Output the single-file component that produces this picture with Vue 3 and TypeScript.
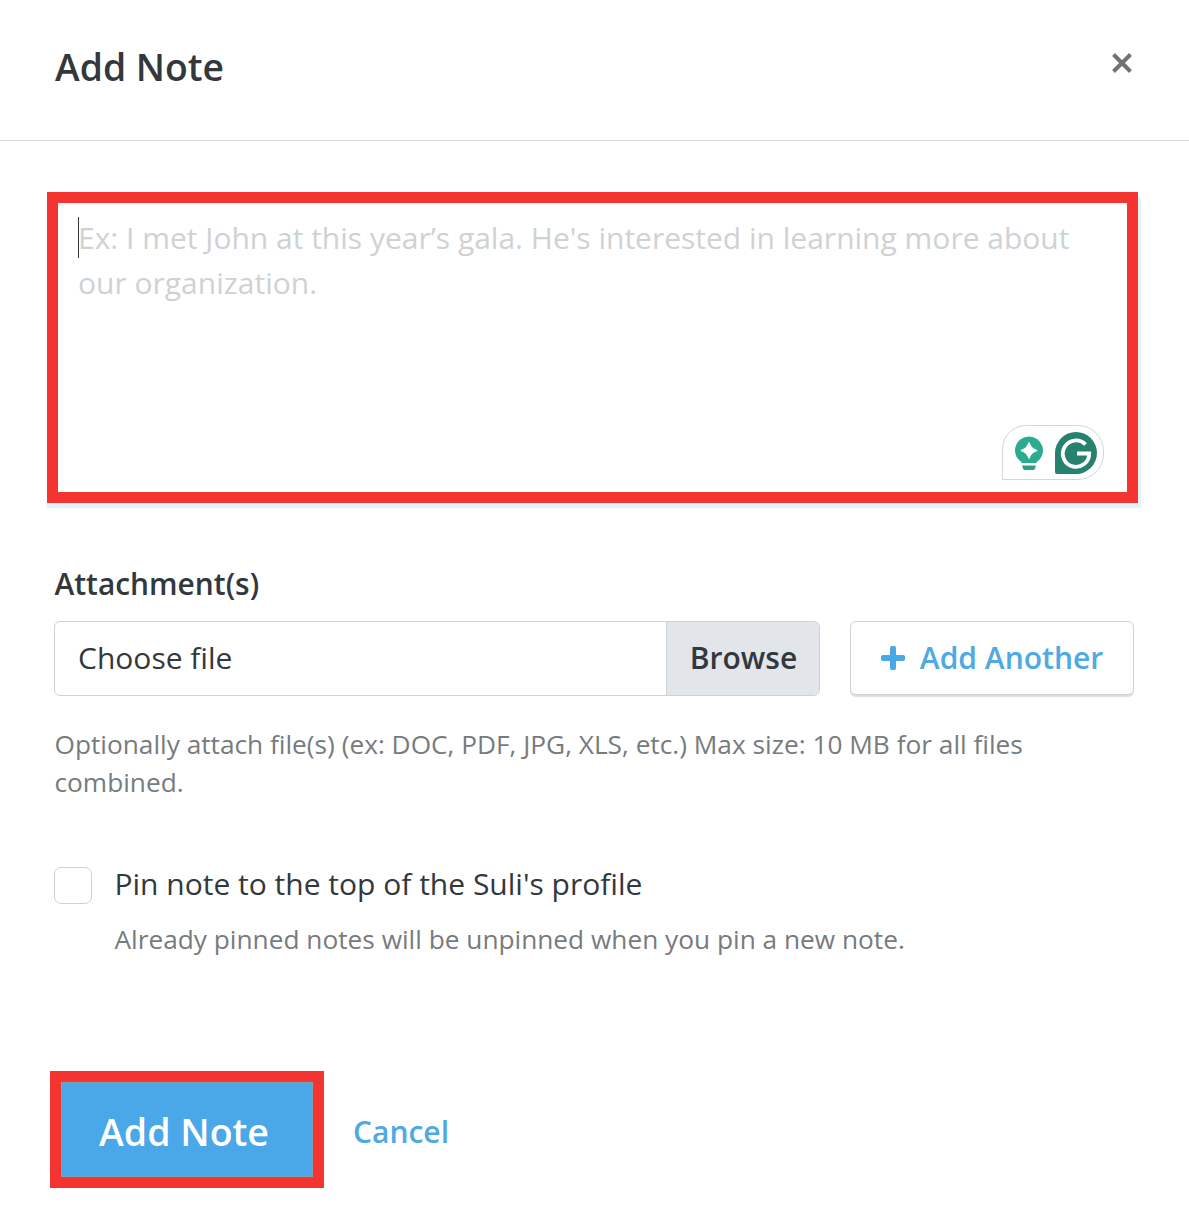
<script setup lang="ts">
const placeholder = "Ex: I met John at this year’s gala. He's interested in learning more about our organization."
</script>

<template>
  <div class="modal">
    <header class="head">
      <h1 class="title">Add Note</h1>
      <button class="close" aria-label="Close">
        <svg width="22" height="22" viewBox="0 0 22 22"><path d="M2.5 2.500 19.500 19.500M19.500 2.500 2.500 19.500" stroke="#6f7376" stroke-width="4" fill="none"/></svg>
      </button>
    </header>
    <main class="body">
      <div class="note">
        <span class="caret"></span>
        <p class="ph">{{ placeholder }}</p>
        <div class="gram">
          <svg width="30" height="36" viewBox="0 0 30 36">
            <path d="M15 1.500a14 14 0 0 1 7.500 25.800V28h-15v-.700A14 14 0 0 1 15 1.500Z" fill="#2bac90"/>
            <path d="M8 30.500h14l-1 3a2 2 0 0 1-2 1.500h-8a2 2 0 0 1-2-1.500Z" fill="#2f9e85"/>
            <path d="M15 8Q16.800 13.700 22.500 15.500 16.800 17.300 15 23 13.200 17.300 7.500 15.500 13.200 13.700 15 8Z" fill="#fff" stroke="#fff" stroke-width="1.500" stroke-linejoin="round"/>
          </svg>
          <svg class="g" width="42" height="42" viewBox="0 0 42 42">
            <path d="M21 0a21 21 0 0 1 0 42H2a2 2 0 0 1-2-2V21A21 21 0 0 1 21 0Z" fill="#26816f"/>
            <path d="M30.500 12.500A13.200 13.200 0 1 0 34.200 21.500H22" fill="none" stroke="#fff" stroke-width="3.800"/>
          </svg>
        </div>
      </div>

      <h2 class="label">Attachment(s)</h2>
      <div class="files">
        <div class="picker">
          <span class="choose">Choose file</span>
          <span class="browse">Browse</span>
        </div>
        <button class="another">
          <svg width="24" height="24" viewBox="0 0 24 24"><path d="M12 2.500v19M2.500 12h19" stroke="#4aa8e8" stroke-width="6" stroke-linecap="round" fill="none"/></svg>
          <span class="another-text">Add Another</span>
        </button>
      </div>
      <p class="hint">Optionally attach file(s) (ex: DOC, PDF, JPG, XLS, etc.) Max size: 10 MB for all files combined.</p>

      <div class="pin">
        <span class="check"></span>
        <div>
          <div class="pin-label">Pin note to the top of the Suli's profile</div>
          <div class="pin-sub">Already pinned notes will be unpinned when you pin a new note.</div>
        </div>
      </div>

      <div class="actions">
        <button class="submit">Add Note</button>
        <a class="cancel">Cancel</a>
      </div>
    </main>
  </div>
</template>

<style>
html, body { margin: 0; background: #fff; }
</style>

<style scoped>
.modal {
  width: 1189px;
  height: 1230px;
  overflow: hidden;
  background: #fff;
  font-family: "Open Sans", sans-serif;
  color: #33383c;
}
.head {
  height: 140px;
  box-sizing: content-box;
  border-bottom: 1px solid #d5d7d8;
  display: flex;
  justify-content: space-between;
  align-items: flex-start;
  padding: 0 56px 0 55px;
}
.title {
  margin: 42px 0 0;
  font-size: 37.3px;
  line-height: 49px;
  font-weight: 600;
}
.close {
  margin-top: 52px;
  padding: 0;
  border: 0;
  background: none;
  display: flex;
}
.body {
  padding: 51px 51px 0 47px;
}
.note {
  position: relative;
  border: 11px solid #f33430;
  box-shadow: 3px 5px 1px #e4f2fb, 0 5px 1px #e4f2fb;
  padding: 12px 20px;
  box-sizing: content-box;
  width: 1029px;
  height: 265px;
}
.caret {
  position: absolute;
  left: 20px;
  top: 14px;
  width: 1px;
  height: 41px;
  background: #33383c;
}
.ph {
  margin: 0;
  font-size: 30px;
  line-height: 45px;
  color: #cfd2d3;
}
.gram {
  position: absolute;
  right: 23px;
  bottom: 12px;
  width: 102px;
  height: 55px;
  box-sizing: border-box;
  border: 1.500px solid #d5d5e0;
  border-radius: 24px 26px 26px 0;
  display: flex;
  align-items: center;
  gap: 11px;
  padding-left: 10.500px;
}
.g { flex: none; }
.label {
  margin: 62px 0 0 7.500px;
  font-size: 29.9px;
  line-height: 38px;
  font-weight: 600;
}
.files {
  display: flex;
  gap: 30px;
  margin: 18px 0 0 7px;
}
.picker {
  width: 766px;
  height: 75px;
  box-sizing: border-box;
  border: 1px solid #cfd2d4;
  border-radius: 6px;
  display: flex;
  overflow: hidden;
}
.choose {
  flex: 1;
  padding-left: 23px;
  font-size: 30px;
  line-height: 72px;
}
.browse {
  width: 151px;
  padding-left: 1px;
  text-align: center;
  background: #e2e5ea;
  border-left: 1px solid #cfd2d4;
  font-size: 30px;
  line-height: 72px;
  font-weight: 600;
}
.another {
  width: 284px;
  height: 74px;
  box-sizing: border-box;
  background: #fff;
  border: 1px solid #cfd2d4;
  border-radius: 6px;
  box-shadow: 0 2px 1px #dcdedf;
  display: flex;
  align-items: center;
  justify-content: center;
  gap: 15px;
  padding: 0;
  font-family: inherit;
  font-size: 30px;
  font-weight: 600;
  color: #4fa9e3;
}
.another-text {
  margin-bottom: 2px;
}
.hint {
  margin: 29px 0 0 7.500px;
  font-size: 26.25px;
  line-height: 38px;
  color: #777b7e;
}
.pin {
  display: flex;
  gap: 22.500px;
  margin: 59px 0 0 7px;
}
.check {
  flex: none;
  width: 38px;
  height: 37px;
  margin-top: 7px;
  box-sizing: border-box;
  border: 1px solid #cfd2d4;
  border-radius: 7px;
}
.pin-label {
  font-size: 30px;
  line-height: 48px;
}
.pin-sub {
  margin-top: 13px;
  font-size: 26.25px;
  line-height: 36px;
  color: #777b7e;
}
.actions {
  display: flex;
  align-items: center;
  gap: 30px;
  margin: 114px 0 0 3px;
}
.submit {
  width: 274px;
  height: 117px;
  box-sizing: border-box;
  border: 11px solid #f33430;
  padding: 4px 6px 0 0;
  background: #4aa8e8;
  box-shadow: inset 0 0 0 1px #7f9fb5;
  font-family: inherit;
  font-size: 37.5px;
  font-weight: 600;
  color: #fff;
}
.cancel {
  margin: 4px 0 0 -1px;
  font-size: 30px;
  font-weight: 600;
  color: #4fa9e3;
}
</style>
